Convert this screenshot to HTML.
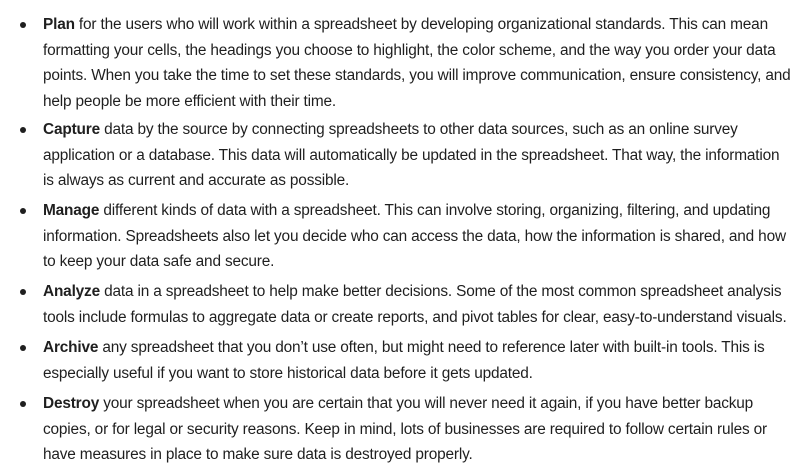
<!DOCTYPE html>
<html><head><meta charset="utf-8"><style>
html,body{margin:0;padding:0;background:#fff;width:802px;height:466px;overflow:hidden}
body{font-family:"Liberation Sans",sans-serif;font-size:15.4px;color:#1f1f1f;letter-spacing:-0.17px}
.item{position:absolute;left:43px;line-height:25.6px;white-space:nowrap}
.item::before{content:"";position:absolute;left:-23px;top:10px;width:6px;height:6px;border-radius:50%;background:#1f1f1f}
b{font-weight:bold}
</style></head><body>
<div class="item" style="top:12px"><b>Plan</b> for the users who will work within a spreadsheet by developing organizational standards. This can mean<br>formatting your cells, the headings you choose to highlight, the color scheme, and the way you order your data<br>points. When you take the time to set these standards, you will improve communication, ensure consistency, and<br>help people be more efficient with their time.</div>
<div class="item" style="top:117px"><b>Capture</b> data by the source by connecting spreadsheets to other data sources, such as an online survey<br>application or a database. This data will automatically be updated in the spreadsheet. That way, the information<br>is always as current and accurate as possible.</div>
<div class="item" style="top:198px"><b>Manage</b> different kinds of data with a spreadsheet. This can involve storing, organizing, filtering, and updating<br>information. Spreadsheets also let you decide who can access the data, how the information is shared, and how<br>to keep your data safe and secure.</div>
<div class="item" style="top:279px"><b>Analyze</b> data in a spreadsheet to help make better decisions. Some of the most common spreadsheet analysis<br>tools include formulas to aggregate data or create reports, and pivot tables for clear, easy-to-understand visuals.</div>
<div class="item" style="top:335px"><b>Archive</b> any spreadsheet that you don’t use often, but might need to reference later with built-in tools. This is<br>especially useful if you want to store historical data before it gets updated.</div>
<div class="item" style="top:391px"><b>Destroy</b> your spreadsheet when you are certain that you will never need it again, if you have better backup<br>copies, or for legal or security reasons. Keep in mind, lots of businesses are required to follow certain rules or<br>have measures in place to make sure data is destroyed properly.</div>
</body></html>
